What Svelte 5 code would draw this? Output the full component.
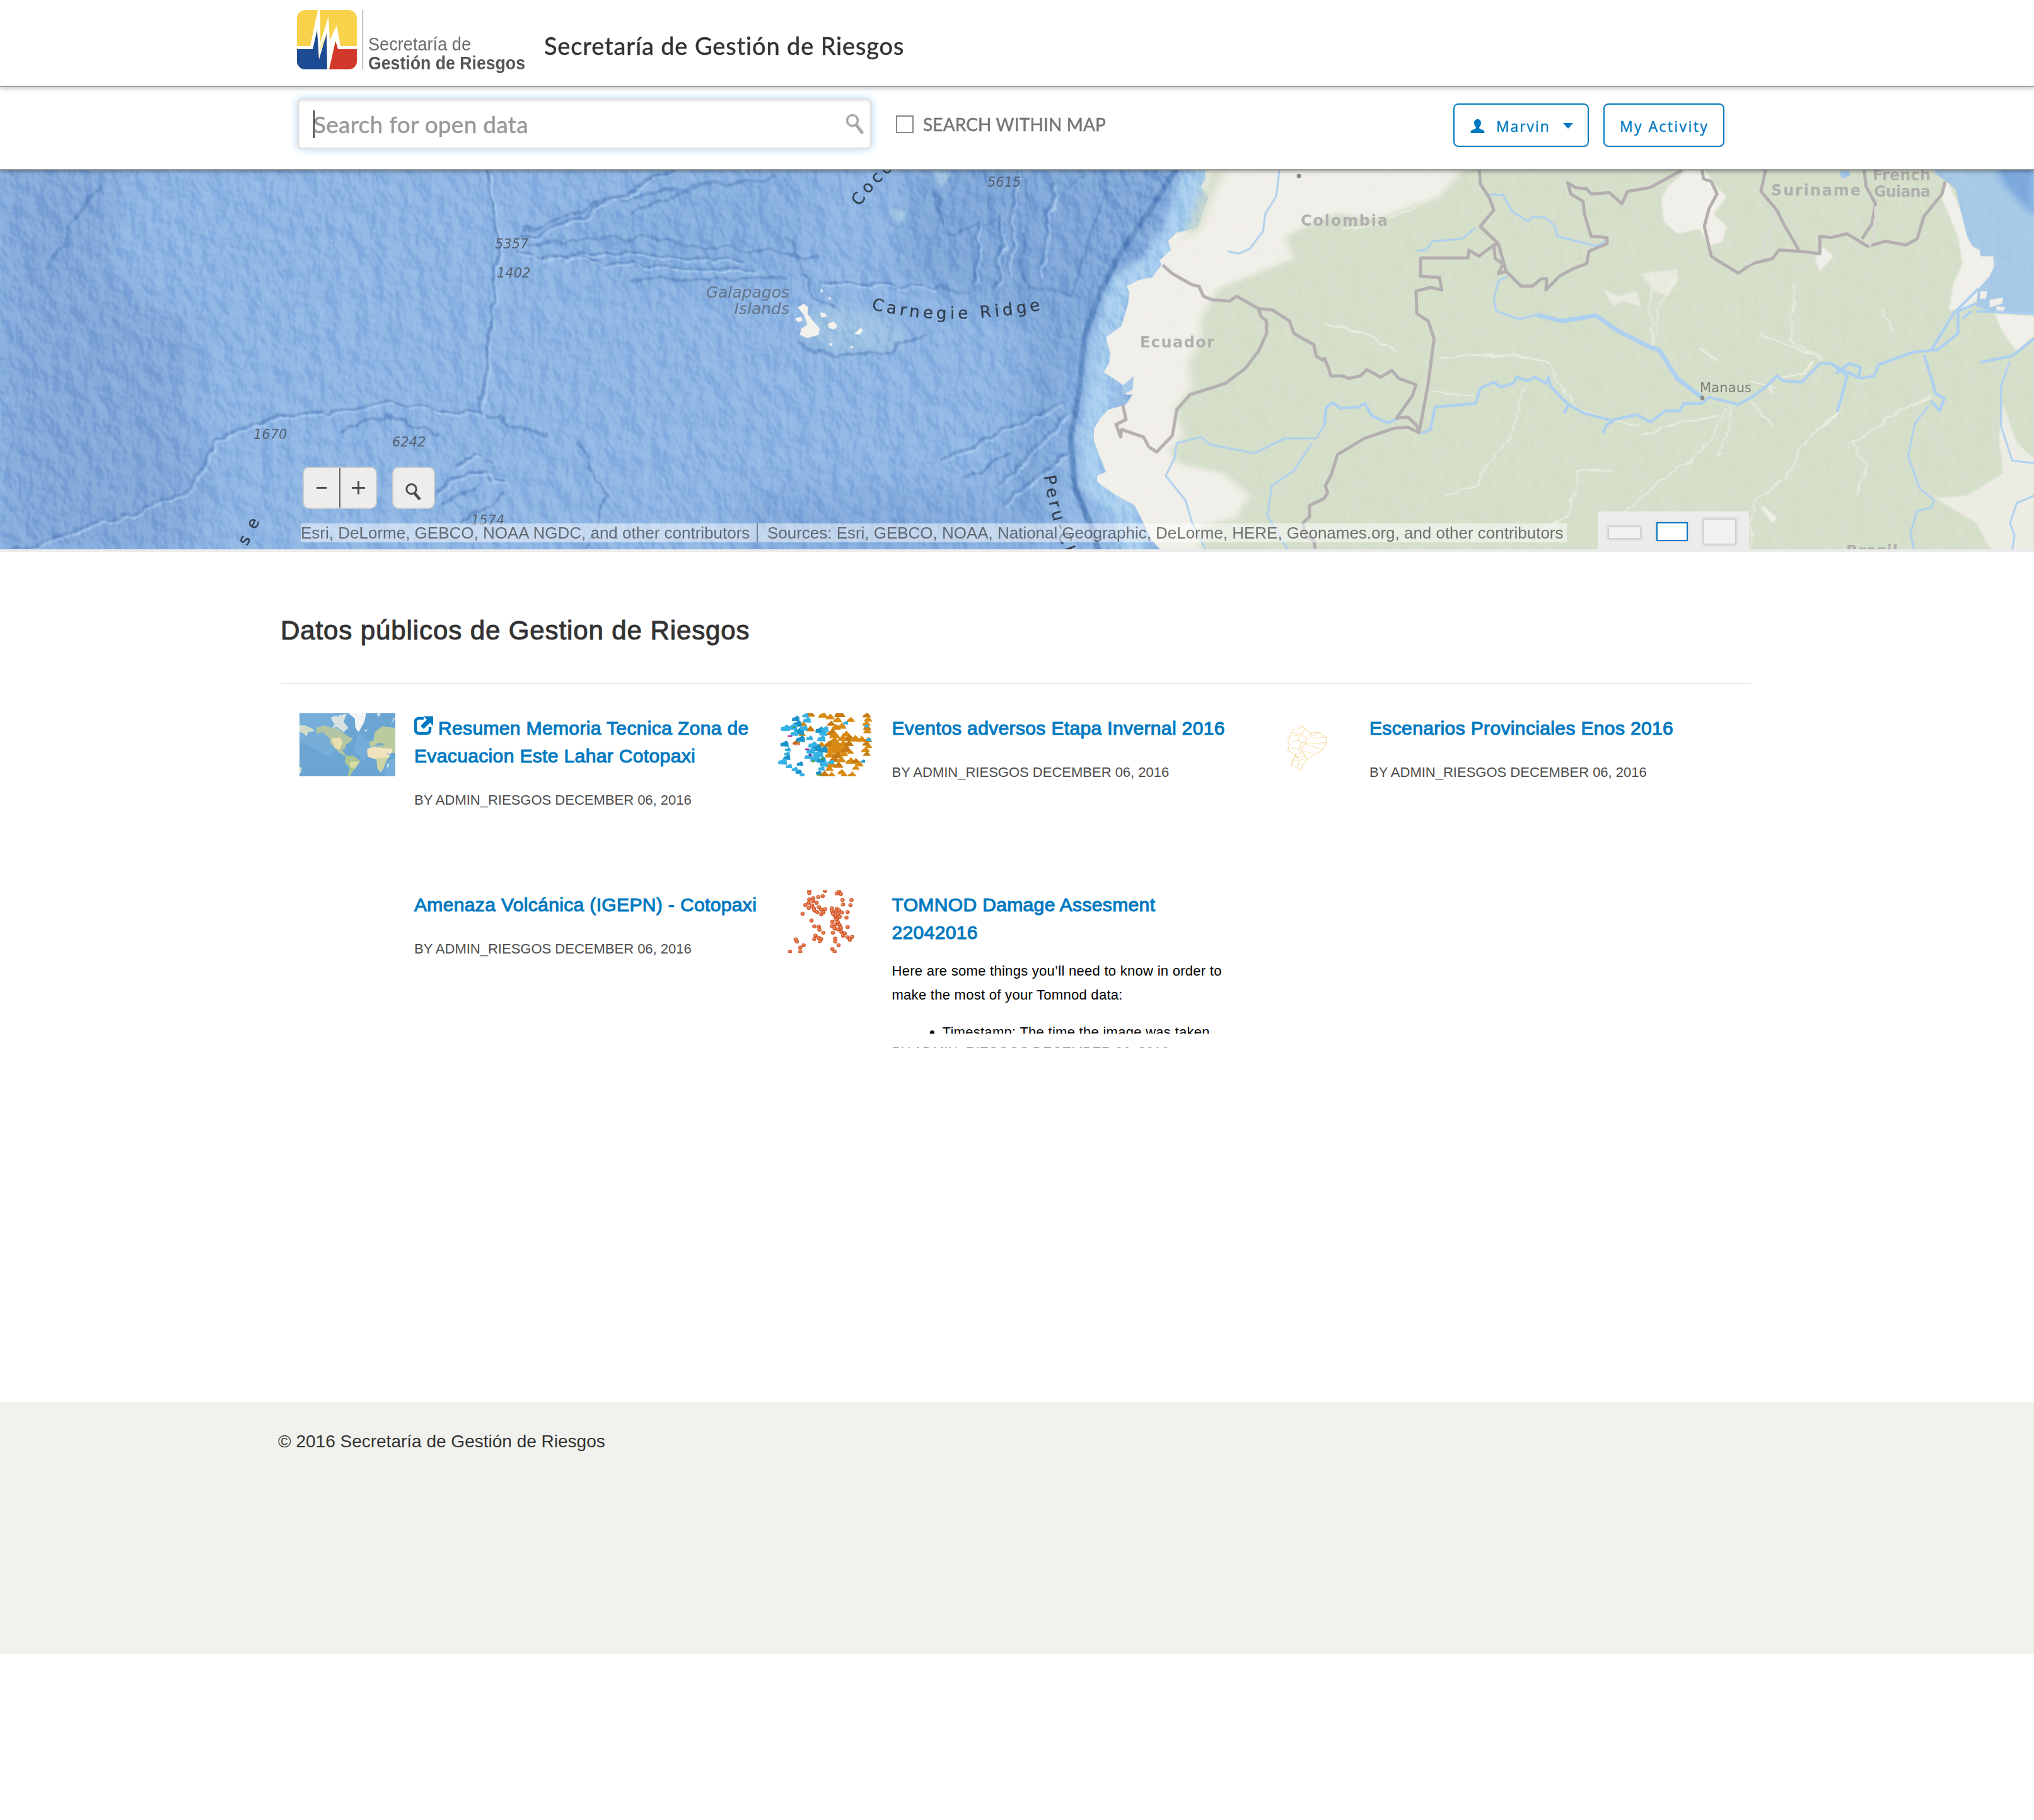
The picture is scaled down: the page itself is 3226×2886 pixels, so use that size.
<script>
  const byline = 'BY ADMIN_RIESGOS DECEMBER 06, 2016';
  const items = [
    { title: 'Resumen Memoria Tecnica Zona de Evacuacion Este Lahar Cotopaxi', thumb: 'world', external: true },
    { title: 'Eventos adversos Etapa Invernal 2016', thumb: 'events' },
    { title: 'Escenarios Provinciales Enos 2016', thumb: 'provinces' },
    { title: 'Amenaza Volcánica (IGEPN) - Cotopaxi', thumb: 'none' },
    { title: 'TOMNOD Damage Assesment 22042016', thumb: 'damage', description: true }
  ];

  // Marker symbols of the winter-season events thumbnail: [x, y, size]
  const blue = [[125,115,12],[155,100,10],[160,122,12],[130,140,14],[115,155,15],[92,160,14],[135,175,16],[120,185,12],[150,160,12],[200,170,14],[215,165,12],[210,185,12],[140,212,14],[168,208,10],[205,210,13],[90,235,13],[100,262,9],[98,282,9],[97,300,11],[84,320,14],[178,240,14],[190,255,16],[172,268,14],[195,282,16],[210,262,14],[165,295,13],[185,305,15],[205,312,14],[212,330,13],[235,322,10],[138,330,10],[104,341,10],[122,356,10],[134,368,10],[145,383,8],[205,352,10],[196,372,9],[280,135,8],[352,215,8],[334,318,7],[345,150,7]];
  const orange = [[170,95,14],[210,100,14],[232,108,13],[262,95,16],[255,122,13],[296,122,12],[346,100,12],[350,120,12],[345,140,12],[347,160,12],[348,176,12],[148,142,11],[170,165,13],[95,165,10],[145,190,10],[235,140,12],[250,158,14],[268,152,14],[238,182,16],[246,196,16],[282,190,14],[292,210,16],[310,212,15],[330,215,14],[350,218,12],[270,210,14],[245,222,16],[228,240,16],[250,242,18],[272,240,18],[290,235,14],[238,262,20],[262,265,20],[282,262,16],[205,240,12],[232,288,16],[255,290,16],[275,285,12],[295,275,10],[245,310,15],[266,312,14],[235,335,16],[258,338,14],[230,355,12],[296,318,15],[312,318,12],[322,332,13],[312,350,11],[345,235,12],[352,248,10],[342,265,13],[346,284,11],[268,370,12],[276,384,11],[214,380,14],[236,386,14],[300,384,14],[125,230,10],[185,300,9]];
  // Reported damage points
  const dots = [[743,95],[743,106],[771,95],[796,98],[792,107],[799,110],[767,120],[759,124],[750,130],[743,136],[750,144],[756,152],[742,152],[736,162],[748,164],[742,176],[751,178],[760,172],[752,188],[764,184],[771,182],[757,196],[768,198],[764,206],[818,138],[802,138],[816,163],[803,160],[783,178],[792,180],[783,190],[790,192],[796,188],[785,204],[794,206],[801,198],[789,218],[797,218],[790,212],[793,226],[811,196],[809,222],[731,204],[747,236],[791,232],[784,242],[794,244],[783,262],[790,256],[797,258],[788,274],[794,278],[799,272],[811,267],[752,264],[760,266],[761,280],[768,294],[785,294],[800,290],[806,298],[754,308],[760,318],[752,324],[764,324],[762,334],[789,322],[803,308],[811,316],[819,314],[815,328],[789,336],[719,326],[721,336],[795,354],[733,354],[727,365],[709,384],[727,385],[784,372],[788,384]];
  const depths = [['5357',785,394],['1402',788,440],['1670',402,696],['6242',622,708],['1574',747,832],['5615',1566,296]];
  const countries = [['Colombia',2063,358,138],['Ecuador',1808,551,118],['Suriname',2809,310,142],['French',2970,286,92],['Guiana',2972,312,90],['Brazil',2928,882,82]];
</script>

<div class="page">
  <header class="brand">
    <svg class="logo" viewBox="0 0 370 110" aria-label="Secretaría de Gestión de Riesgos">
      <clipPath id="badge"><rect x="0" y="0" width="95" height="94" rx="13" /></clipPath>
      <g clip-path="url(#badge)">
        <rect width="95" height="94" fill="#f8d24a" />
        <path d="M0 61H24L32 30L35 78L47 36L49 94H0Z" fill="#1c4a93" />
        <path d="M51 94L61 50L67 61H95V94Z" fill="#d2372b" />
        <path d="M0 57H21L33 0H37V52L50 10L52 48L63 24L69 57H95V62H65L61 48L51 94H48L47 36L35 78L32 31L25 62H0Z" fill="#fff" />
        <path d="M37 56L47 38L46 44L37 64Z" fill="#f8d24a" opacity=".5" />
      </g>
      <path d="M104.500 0V94" stroke="#8a8a8a" stroke-width="1.200" />
      <text class="logo-light" x="113" y="64" textLength="163" lengthAdjust="spacingAndGlyphs">Secretaría de</text>
      <text class="logo-bold" x="113" y="94" textLength="249" lengthAdjust="spacingAndGlyphs">Gestión de Riesgos</text>
    </svg>
    <h1>Secretaría de Gestión de Riesgos</h1>
  </header>

  <nav class="toolbar">
    <div class="search">
      <span class="caret"></span>
      <span class="placeholder">Search for open data</span>
      <svg width="30" height="34" viewBox="0 0 30 34" fill="none" stroke="#aaa"><circle cx="11" cy="11" r="8.500" stroke-width="3.600" /><path d="M17 18L26 30" stroke-width="5" stroke-linecap="round" /></svg>
    </div>
    <label class="within"><span class="box"></span><span class="within-text">SEARCH WITHIN MAP</span></label>
    <div class="actions">
      <button class="user">
        <svg width="23" height="22" viewBox="0 0 23 22" fill="#0079c1"><path d="M11.500 0C15 0 17 2.500 17 6C17 9 15.500 11 14 13C14 15 15 15.500 19 16.800C22 17.800 22.500 19 22.500 22H.5C.5 19 1 17.800 4 16.800C8 15.500 9 15 9 13C7.500 11 6 9 6 6C6 2.500 8 0 11.500 0Z" /></svg>
        <span>Marvin</span>
        <svg class="down" width="16" height="9" viewBox="0 0 16 9" fill="#0079c1"><path d="M0 0H16L8 9Z" /></svg>
      </button>
      <button class="activity">My Activity</button>
    </div>
  </nav>

  <section class="map">
    <svg class="basemap" viewBox="0 270 3226 601">
      <defs>
        <filter id="relief" x="0" y="0" width="100%" height="100%" color-interpolation-filters="sRGB">
          <feTurbulence type="fractalNoise" baseFrequency=".04 .03" numOctaves="3" seed="11" />
          <feColorMatrix values="0 0 0 0 0  0 0 0 0 0  0 0 0 0 0  1 0 0 0 0" />
          <feDiffuseLighting surfaceScale="9" diffuseConstant="1" lighting-color="#fff"><feDistantLight azimuth="325" elevation="30" /></feDiffuseLighting>
        </filter>
        <filter id="soft" x="-20%" y="-20%" width="140%" height="140%"><feGaussianBlur stdDeviation="9" /></filter>
        <filter id="softer" x="-20%" y="-20%" width="140%" height="140%"><feGaussianBlur stdDeviation="22" /></filter>
        <filter id="slight" x="-20%" y="-20%" width="140%" height="140%"><feGaussianBlur stdDeviation="2.500" /></filter>
        <filter id="rough" x="-5%" y="-5%" width="110%" height="110%">
          <feTurbulence type="fractalNoise" baseFrequency=".03" numOctaves="3" seed="4" />
          <feDisplacementMap in="SourceGraphic" scale="22" xChannelSelector="R" yChannelSelector="G" />
          <feGaussianBlur stdDeviation="1.300" />
        </filter>
        <path id="carnegie" d="M1382 490Q1500 522 1670 488" />
        <path id="cocos" d="M1364 328Q1385 290 1470 222" />
        <path id="peru" d="M1656 755Q1664 820 1705 920" />
        <path id="rise" d="M382 886L436 780" />
      </defs>
      <rect y="268" width="3226" height="604" fill="#8fb6e4" />

      <!-- sea floor shading -->
      <g filter="url(#softer)">
        <path d="M0 260H190L165 420L240 480L320 540L290 620L330 760L300 880H0Z" fill="#7fa6d7" opacity=".8" />
        <path d="M1450 250H1900L1810 430L1700 560L1640 880H1580L1640 520L1420 430Z" fill="#779fd3" opacity=".65" />
        <path d="M1180 780H1560V880H1180Z" fill="#7ca4d7" opacity=".6" />
        <path d="M850 350L1300 260L1250 440L1000 450Z" fill="#80a9da" opacity=".55" />
      </g>
      <path d="M1270 500L1330 480L1400 500L1440 540L1420 555L1330 562L1275 530Z" fill="#a8cbe4" opacity=".6" filter="url(#soft)" />
      <path d="M1410 330L1440 335L1425 360ZM1480 270L1510 275L1490 300Z" fill="#a8cbe4" opacity=".8" filter="url(#slight)" />
      <g fill="none" stroke="#6590c6" stroke-width="4.500" filter="url(#rough)" opacity=".75">
        <path d="M773 268L790 390L780 500L762 660M0 880L300 780L340 700L440 660L610 640L760 655L870 690M1000 340L1090 300L1230 280M820 380L930 340L1080 260M820 400L1000 420L1200 430" />
        <path d="M1262 545L1325 564L1400 558L1470 530M1490 730L1680 640M1580 770L1690 660M1590 800L1690 720M1550 350L1545 450M1590 340L1580 460M1670 290L1650 440M1760 268L1720 400L1700 470L1630 450M1300 450L1480 455L1540 465M1250 370L1290 470L1320 490" />
        <path d="M75 430L120 350L160 290M920 700L960 790L930 870M830 365L960 320L1060 300L1180 290M840 385L980 375L1100 390L1230 400L1300 410M850 410L1000 400L1180 415M1000 440L1100 445L1250 440M1010 300L1090 262M1480 300L1500 370L1580 350M1610 270L1600 440M1630 280L1622 450M1560 270L1570 330M1690 300L1720 280M1530 760L1600 720M540 680L620 660L700 690M720 740L760 720L790 745M690 780L740 750L800 760M700 800L760 770M730 830L800 780" />
      </g>
      <g fill="none" stroke="#b2d2f4" stroke-width="3" filter="url(#rough)" opacity=".7" transform="translate(5 4)">
        <path d="M773 268L790 390L780 500L762 660M0 880L300 780L340 700L440 660L610 640L760 655M820 380L930 340L1080 260M820 400L1000 420L1200 430M1490 730L1680 640M1580 770L1690 660M1590 800L1690 720M1550 350L1545 450M1590 340L1580 460M1670 290L1650 440M1610 270L1600 440M1300 450L1480 455M850 410L1000 400L1180 415M720 740L760 720L790 745M690 780L740 750L800 760" />
      </g>
      <g transform="translate(1000 260) scale(.7015 .3954)" fill="none" class="fixed">
        <path d="M1285 0L1240 250L1190 400L1110 500L1075 720L1065 900L1045 1080L1050 1270L1110 1400L1150 1568" stroke="#a8ceee" stroke-width="44" filter="url(#soft)" />
        <path d="M1240 0L1180 170L1110 350L1065 500L1025 700L1015 900L995 1100L1005 1300L1040 1450L1060 1568" stroke="#5f8cc4" stroke-width="9" filter="url(#slight)" />
      </g>
      <rect class="sea-relief" y="268" width="3226" height="604" filter="url(#relief)" />

      <!-- Galapagos -->
      <g transform="translate(1000 260) scale(.7015 .3954)" fill="#f4f2ec">
        <path d="M378 575L392 560L402 575L400 600L415 635L428 660L425 685L400 698L383 685L386 660L400 645L392 605ZM372 620L385 612L390 628L378 634ZM428 595L440 598L444 612L432 616ZM446 640L460 632L468 650L460 664L448 658ZM506 680L520 658L526 665L518 685ZM446 720L455 718L456 732ZM430 500L436 510L430 515ZM446 532L454 538L450 546ZM496 730L506 732L500 740Z" />
      </g>

      <!-- land -->
      <g transform="translate(1000 260) scale(.7015 .3954)">
        <path d="M1300 0L1300 60L1290 90L1308 130L1292 200L1283 255L1255 268L1235 275L1215 310L1222 345L1197 385L1200 405L1180 455L1150 465L1122 490L1128 515L1125 560L1110 650L1075 695L1085 760L1082 800L1070 835L1100 870L1115 890L1120 925L1135 925L1120 965L1080 985L1062 1020L1048 1060L1048 1110L1058 1160L1075 1235L1055 1250L1055 1275L1095 1325L1140 1370L1160 1440L1175 1500L1197 1545L1200 1600H3200V0Z" fill="#f1efe9" />
        <path d="M1112 925L1112 890L1138 850L1143 800L1138 850L1135 905Z" fill="#a9cbea" />
        <g filter="url(#soft)">
          <path d="M1590 200L1480 290L1500 380L1330 500L1290 620L1290 720L1260 800L1270 900L1230 980L1250 1090L1220 1150L1240 1200L1340 1240L1400 1330L1370 1420L1290 1450L1290 1600H3220V-20H1900L1830 130L1690 220Z" fill="#d5dfca" />
          <path d="M1310 20L1345 40L1315 130L1290 260L1250 310Z" fill="#d5dfca" opacity=".8" />
        </g>
      </g>
      <g transform="translate(2100 260) scale(.7181 .3954)">
        <g fill="#f1efe9" filter="url(#slight)">
          <path d="M760 90L800 25H840L870 100L890 130L860 200L890 250L880 310L850 330L830 260L780 280L750 230L745 140Z" />
          <path d="M615 500L650 530L690 510L700 570L660 550L640 570ZM700 440L780 420L780 470L760 530L730 510Z" opacity=".7" />
          <path d="M1100 330L1125 370L1095 430L1085 380Z" />
          <path d="M1375 60L1405 180L1480 370L1480 480L1420 580L1380 590L1390 480L1410 400L1400 290L1365 140ZM1480 600L1568 610V690L1530 750L1500 680Z" />
          <path d="M1500 960L1530 1120L1568 1180V1568H1480L1440 1440L1350 1340L1420 1330L1500 1240L1490 1100Z" opacity=".85" />
          <path d="M970 1370L1000 1420L990 1440L965 1380Z" />
        </g>
        <path d="M1345 0L1350 40L1375 70L1395 100L1405 180L1420 290L1432 330L1448 345L1450 370L1478 370L1480 410L1470 450L1445 500L1440 570L1470 590L1568 605V0Z" fill="#a8cae7" />
        <path d="M1450 510L1465 510L1462 540L1448 540ZM1470 545L1500 535L1498 560L1470 575ZM1485 570L1505 575L1500 590L1485 588Z" fill="#f1efe9" />
        <path d="M1480 0L1500 80L1568 210V0Z" fill="#7eaade" filter="url(#soft)" />
        <path d="M1138 30L1160 26L1162 45L1145 60Z" fill="#a6c9ec" />
        <g fill="none" class="fixed" stroke="#eff1e4" stroke-width="3" opacity=".7" filter="url(#rough)">
          <path d="M250 780L330 765L440 770L500 800L520 880L560 980L640 1030L700 1050M440 900L410 1100L370 1180L340 1290L270 1330M700 1090L800 1030L870 1010M890 980L850 1110L810 1190L740 1270L700 1340L660 1400M900 970L890 1100L870 1170M940 950L990 1050M1130 1000L1060 1120L1030 1230L990 1300L950 1350L940 1460L950 1568M780 450L740 560L730 730M720 430L725 730M1040 480L1030 700L1100 790M1230 580L1260 670M960 680L1100 780M1340 930L1270 990L1170 1120L1200 1220L1170 1330M640 1230L560 1230L550 1330L540 1410L470 1480M0 640L90 680L160 750M240 910L330 930M40 260L120 240L230 150" />
        </g>
        <path d="M1340 940L1300 970M940 870L1000 900M1000 860L1060 840L1080 790M830 740L870 790M980 880L990 920M1100 1060L1140 990" fill="none" stroke="#f1efe6" stroke-width="7" opacity=".7" />
      </g>
      <rect class="land-relief" x="1740" y="268" width="1486" height="604" filter="url(#relief)" />

      <!-- rivers -->
      <g fill="none" stroke="#aed0f0" stroke-width="3" stroke-linejoin="round">
        <g class="fixed" transform="translate(1000 260) scale(.7015 .3954)">
          <path d="M1467 25L1460 130L1435 200L1430 270L1400 340L1375 360L1350 350M1300 1545L1270 1440L1255 1350L1210 1250L1230 1180L1235 1120L1290 1095L1310 1125L1410 1160L1480 1100L1550 1100L1568 1050M1540 1120L1500 1230L1450 1290L1440 1410L1485 1545" />
        </g>
        <g class="fixed" transform="translate(2100 260) scale(.7181 .3954)">
          <path d="M355 110L360 122L395 125L415 190L450 230L460 213L490 215L510 250L515 290L600 330L625 305M205 348L225 345L240 310L305 300L335 255M405 450L385 470L375 540L380 590L430 622L470 605" />
          <path d="M0 1050L5 975L20 958L35 980L75 975L90 960L105 1010L140 1038L165 1020M215 1080L235 1065L245 975L335 960L345 900L375 875L390 895L418 880L425 855L450 870L465 855L490 880L495 855L500 890L520 930L540 965L575 1000L635 1028L690 1005L720 1035L755 990L785 990L795 960L835 960L850 935L915 965L945 935L975 895L1000 850L1015 870L1055 875L1095 800L1120 800L1150 830L1185 860L1215 850L1225 805L1300 755L1355 745L1400 680L1400 590L1440 560" stroke-width="4.500" />
          <path d="M470 605L525 630L600 608L650 670L720 735L740 745L780 860L835 937" stroke-width="7" />
          <path d="M1120 800L1155 850L1145 920L1133 995M1325 765L1345 880L1350 920L1370 940L1360 990L1340 950M1130 840L1160 800L1185 815L1180 860M1340 750L1370 660L1390 600L1445 500M1410 620L1430 590M530 1000L540 965M615 1080L625 1045L640 1030M1568 700L1520 770L1450 795M1440 590L1568 600" stroke-width="4.500" />
          <path d="M1335 970L1305 1040L1290 1170L1315 1300L1348 1350L1340 1380L1310 1390L1295 1480L1303 1545M1515 790L1495 890L1495 1050L1520 1190L1568 1200M1568 1330L1530 1360L1515 1440L1525 1490L1520 1545" />
        </g>
      </g>

      <!-- borders -->
      <g fill="none" stroke="#b3afb0" stroke-width="5" stroke-linejoin="round">
        <g class="fixed" transform="translate(1000 260) scale(.7015 .3954)">
          <path d="M1203 405L1225 440L1250 465L1270 485L1285 490L1295 530L1315 545L1355 550L1370 530L1400 560L1420 580L1450 585L1490 630L1500 680L1545 725L1550 770L1568 790M1420 580L1425 610L1438 630L1438 680L1420 750L1390 820L1345 880L1265 925L1235 985L1225 1090L1200 1135L1190 1155L1172 1135L1160 1095L1110 1065L1108 1095L1098 1045L1120 1025L1113 965M1570 1340L1535 1370L1535 1415L1520 1440L1525 1490L1545 1510L1550 1568" />
        </g>
        <g class="fixed" transform="translate(2100 260) scale(.7181 .3954)">
          <path d="M0 775L10 820L15 850L40 850L55 860L80 850L95 825L125 855L150 828L165 860L203 885L195 930L160 1020L185 1015L205 1050L210 1078L230 880L243 700L230 630L205 600L203 510L235 495L260 505L255 455L213 450L213 377L318 377L320 345L342 370L375 325L385 320L345 250L375 185L365 135L345 80L343 25M385 320L402 430L435 490L460 490L480 460L492 460L490 505L520 450L550 420L580 400L585 350L625 320L625 295L590 290L575 200L572 150L545 120L538 75L555 95L580 100L590 120L630 115L658 160L670 110L720 95L755 60L790 25M375 325L378 380L395 400L385 440L402 430M210 1078L185 1055L155 1060L90 1100L30 1165L15 1250L3 1290L8 1320L0 1340" />
          <path d="M835 25L838 60L855 70L868 120L850 180L840 250L855 370L885 405L915 438L945 400L990 380L1005 345L1050 350L1095 360L1095 290L1120 295L1155 280L1200 330L1240 310L1285 325L1310 300L1325 210L1365 120L1372 70M975 25L965 110L1000 185L1015 240L1050 350M1193 25L1197 90L1218 160L1210 240L1188 300" />
          <path d="M990 180L1000 230L975 310L970 360L930 410M1218 170L1215 270L1205 330" stroke="#ddd9d8" stroke-width="4" stroke-dasharray="14 5" />
        </g>
      </g>

      <g class="depth">{#each depths as [t, x, y]}<text {x} {y}>{t}</text>{/each}</g>
      <g class="islands" text-anchor="end"><text x="1252" y="472">Galapagos</text><text x="1252" y="498">Islands</text></g>
      <g class="country">{#each countries as [t, x, y, w]}<text {x} {y} textLength={w}>{t}</text>{/each}</g>
      <text class="city" x="2696" y="622" textLength="82">Manaus</text>
      <circle cx="2700" cy="631" r="3.500" fill="#8b8b87" />
      <circle cx="2060" cy="279" r="3.500" fill="#8b8b87" />
      <g class="ridge">
        <text><textPath href="#carnegie">Carnegie Ridge</textPath></text>
        <text><textPath href="#cocos">Cocos Ridge</textPath></text>
        <text><textPath href="#peru">Peru-Chile</textPath></text>
        <text class="wide-spaced"><textPath href="#rise">ise</textPath></text>
      </g>
    </svg>

    <div class="overlay">
      <div class="controls">
        <div class="zoom"><span><i class="minus"></i></span><span><i class="minus wide"></i><i class="upright"></i></span></div>
        <div class="locate"><svg width="26" height="28" viewBox="0 0 26 28" fill="none" stroke="#4c4c4c"><circle cx="9.500" cy="9.500" r="7.700" stroke-width="3" /><path d="M14.500 16L23 26" stroke-width="4.500" /></svg></div>
      </div>
      <div class="attribution"><span class="first">Esri, DeLorme, GEBCO, NOAA NGDC, and other contributors</span><span class="second">Sources: Esri, GEBCO, NOAA, National Geographic, DeLorme, HERE, Geonames.org, and other contributors</span></div>
      <div class="sizes"><span class="small"></span><span class="medium"></span><span class="large"></span></div>
    </div>
  </section>

  <main>
    <h2><span>Datos públicos de Gestion de Riesgos</span></h2>
    <div class="grid">
      {#each items as item}
        <article>
          <div class="thumb">
            {#if item.thumb === 'world'}
              <svg viewBox="88 570 298 300" preserveAspectRatio="none">
                <rect x="88" y="570" width="298" height="300" fill="#6ba5d3" />
                <path d="M88 570H200L240 690L180 780L88 700ZM270 660L310 720L290 800L260 750ZM360 800L386 780V870H350Z" fill="#7ab1dc" opacity=".7" />
                <path d="M140 640L165 628L190 640L210 645L225 665L240 680L255 690L243 710L232 720L230 740L220 745L230 765L240 775L225 770L210 755L198 735L184 715L182 690L160 660L142 668Z" fill="#b3c5a3" />
                <path d="M186 690L215 685L222 710L212 745L198 735Z" fill="#eadfae" />
                <path d="M185 590L205 580L210 610L195 620ZM210 580L235 572L225 610L240 640L225 660L205 635L190 640L198 620Z" fill="#d7e1df" />
                <path d="M240 570H295L290 610L272 660L262 640L260 595Z" fill="#f4f6f6" />
                <path d="M230 775L255 772L277 797L265 825L252 850L245 870H238L244 830L229 805Z" fill="#aec792" />
                <path d="M245 800L275 800L260 835L246 825Z" fill="#d9dda2" />
                <path d="M88 628L105 628L130 645L135 655L115 660L110 680L100 665L88 658ZM88 825L96 830L92 855H88Z" fill="#d3dcc8" />
                <path d="M320 680L322 660L345 632L386 640V760L365 755L350 735L325 722L308 730L305 705L318 700Z" fill="#bccb9d" />
                <path d="M298 740L320 727L350 735L362 765L370 770L355 800L350 830L340 852L330 830L328 790L300 778Z" fill="#efe3be" />
                <path d="M328 785L362 780L350 830L340 850L330 830Z" fill="#cdd5a0" />
                <path d="M350 735L378 740L372 765L360 760Z" fill="#f4e4c5" />
                <path d="M325 715L345 712L352 724L330 722Z" fill="#6ba5d3" />
                <path d="M360 810L367 815L362 832ZM290 648L300 650L293 658ZM328 572L340 570L335 588ZM372 625L380 595L386 590" fill="#e4ecec" />
              </svg>
            {:else if item.thumb === 'events'}
              <svg viewBox="68 90 298 300" preserveAspectRatio="none">
                {#each orange as [x, y, s], i}<path d="M{x - s * 1.1} {y + s * .8}L{x - s * .8} {y - s * .2}L{x - s * .3} {y - s * .6}L{x} {y - s * 1.3}L{x + s * .7} {y - s * .2}L{x + s * 1.1} {y + s * .8}Z" fill={i % 3 ? '#d98a12' : '#c77b12'} />{/each}
                {#each blue as [x, y, s], i}<path d="M{x - s} {y + s * .9}L{x - s * .9} {y - s * .3}L{x - s * .2} {y - s * .5}L{x + s * .3} {y - s * 1.2}L{x + s * .9} {y - s * .6}L{x + s} {y + s * 1.1}Z" fill={i % 3 ? '#35b1e4' : '#1a94cb'} />{/each}
                <path d="M100 196H114V202H100ZM154 258H166V264H154ZM168 280L176 292L166 294Z" fill="#a31a96" />
                <path d="M120 228H136V240H120Z" fill="none" stroke="#c44d1c" stroke-width="3" />
                <path d="M118 150L125 158L116 160ZM172 318L184 312L180 326ZM194 374L204 386H190ZM208 300L214 312H204Z" fill="#4f9b2f" />
              </svg>
            {:else if item.thumb === 'provinces'}
              <svg viewBox="54.700 210 277 300" preserveAspectRatio="none" fill="none" stroke="#f7d590" stroke-width="2">
                <path d="M190 268L200 285L215 300L240 302L262 325L262 350L250 385L220 415L205 430L195 455L185 482L178 468L160 460L165 440L172 405L160 395L150 388L155 360L150 345L160 310L165 290L185 282Z" />
                <path d="M165 305L190 310L200 285M190 310L205 330L262 325M205 330L200 355L262 350M200 355L250 385M200 355L190 380L205 430M160 345L180 340L190 350L182 380L190 400L172 405M180 340L185 318L165 315M190 350L205 345M182 380L165 375L155 388M170 405L180 425L192 412L205 420M160 440L195 430M178 468L184 440M215 300L218 320L240 302M165 420L178 410M200 390L225 405" />
              </svg>
            {:else if item.thumb === 'damage'}
              <svg viewBox="686.500 90 170 300" preserveAspectRatio="none">
                {#each dots as [x, y]}<ellipse cx={x} cy={y} rx="3.400" ry="8.500" fill="#e2693a" stroke="#b9441c" stroke-width="1" /><ellipse cx={x - .6} cy={y - 2} rx="1.300" ry="3" fill="#f6a57c" />{/each}
              </svg>
            {/if}
          </div>
          <div class="body">
            <h3>{#if item.external}<svg class="ext" width="30" height="30" viewBox="0 0 30 30"><path d="M15 3H8Q2 3 2 9V21Q2 27 8 27H19Q25 27 25 21V17" fill="none" stroke="#0079c1" stroke-width="4.500" /><path d="M15 0H30V15L25 10L15 20L10 15L20 5Z" fill="#0079c1" /></svg>{/if}{item.title}</h3>
            {#if item.description}
              <div class="description">
                <p>Here are some things you’ll need to know in order to make the most of your Tomnod data:</p>
                <ul><li>Timestamp: The time the image was taken</li></ul>
              </div>
            {/if}
            <p class="byline">{byline}</p>
          </div>
        </article>
      {/each}
    </div>
  </main>

  <footer>© 2016 Secretaría de Gestión de Riesgos</footer>
</div>

<style>
  :global(body) { background: #fff; }
  .page { width: 3226px; height: 2886px; overflow: hidden; background: #fff; font-family: "Liberation Sans", Arial, sans-serif; color: #333; display: flex; flex-direction: column; }
  h1, h2, h3, p, ul { margin: 0; padding: 0; font-weight: 400; }
  .brand { height: 136px; flex: none; padding-left: 471px; display: flex; border-bottom: 2px solid #a4a4a4; box-shadow: 0 2px 7px rgba(0, 0, 0, .25); position: relative; z-index: 2; box-sizing: content-box; }
  .logo { width: 370px; height: 110px; margin-top: 16px; flex: none; }
  .logo-light { font: 29px "Liberation Sans", sans-serif; fill: #6c6c6c; }
  .logo-bold { font: bold 30px "Liberation Sans", sans-serif; fill: #555; }
  h1 { margin: 47px 0 0 22px; font: 38px/50px Lato, sans-serif; letter-spacing: .86px; white-space: nowrap; -webkit-text-stroke: .5px #333; }
  .toolbar { height: 132px; flex: none; box-sizing: border-box; border-bottom: 2px solid #999c98; box-shadow: 0 2px 6px rgba(0, 0, 0, .35); position: relative; z-index: 1; padding-left: 471px; display: flex; align-items: flex-start; background: #fff; }
  .search { width: 912px; height: 81px; box-sizing: border-box; margin-top: 18px; border: 3px solid #e3e1e1; border-radius: 8px; box-shadow: 0 0 14px #b4dcf8, inset 0 2px 4px rgba(0, 0, 0, .08); display: flex; align-items: center; padding: 0 9px 0 23px; }
  .caret { width: 2px; height: 44px; background: #333; }
  .placeholder { flex: 1; font: 37px/44px Lato, sans-serif; color: #999; margin-left: -2px; letter-spacing: .25px; -webkit-text-stroke: .5px #999; }
  .within { display: flex; margin: 39px 0 0 38px; align-items: center; height: 40px; gap: 15px; }
  .box { width: 28px; height: 28px; box-sizing: border-box; border: 2px solid #888; }
  .within-text { font: 28px/36px Lato, sans-serif; color: #757575; white-space: nowrap; letter-spacing: .15px; -webkit-text-stroke: .5px #757575; width: 300px; }
  .actions { display: flex; gap: 23px; margin: 26px 491px 0 auto; }
  button { height: 69px; box-sizing: border-box; border: 2px solid #0079c1; border-radius: 8px; background: #fff; color: #0079c1; font: 23px/30px "Open Sans", sans-serif; letter-spacing: 2.4px; padding: 2px 0 0 25px; display: flex; align-items: center; white-space: nowrap; text-align: left; -webkit-text-stroke: .4px #0079c1; }
  .user { width: 215px; letter-spacing: 1.9px; }
  .user span { margin-left: 18px; width: 106px; }
  .activity { width: 192px; padding-left: 24px; }
  .map { height: 601px; flex: none; border-bottom: 4px solid #ebebeb; display: grid; overflow: hidden; }
  .basemap, .overlay { grid-area: 1 / 1; }
  .basemap { width: 3226px; height: 601px; display: block; }
  .fixed path { vector-effect: non-scaling-stroke; }
  .sea-relief { mix-blend-mode: soft-light; opacity: .24; }
  .land-relief { mix-blend-mode: soft-light; opacity: .07; }
  .depth text { font: italic 21px "DejaVu Sans", sans-serif; fill: #566070; }
  .islands text { font: italic 25px "DejaVu Sans", sans-serif; fill: #647489; }
  .country text { font: bold 24px "DejaVu Sans", sans-serif; fill: #b1afae; }
  .city { font: 21px "DejaVu Sans", sans-serif; fill: #7c7d78; }
  .ridge text { font: 26px "DejaVu Sans", sans-serif; fill: #333f50; letter-spacing: 5.500px; stroke: #333f50; stroke-width: .4; }
  .ridge .wide-spaced { letter-spacing: 15px; }
  .overlay { position: relative; display: grid; grid-template-columns: 2057px 240px; padding-left: 477px; grid-template-rows: 541px 60px; }
  .controls { grid-column: 1; grid-row: 1; align-self: end; display: flex; gap: 24px; padding: 0 0 5px 3px; height: 66px; }
  .zoom, .locate { border: 2px solid #c9cbcd; border-radius: 10px; background: #ededed; box-sizing: border-box; height: 67px; display: flex; }
  .zoom { width: 118px; }
  .zoom span { flex: 1; display: grid; place-items: center; }
  .zoom span + span { border-left: 2px solid #666; }
  .zoom i { grid-area: 1 / 1; background: #4c4c4c; }
  .minus { width: 16px; height: 3px; }
  .minus.wide { width: 21px; height: 3px; }
  .upright { width: 3px; height: 21px; }
  .locate { width: 68px; align-items: center; justify-content: center; padding-top: 12px; }
  .attribution { grid-row: 2; grid-column: 1; width: 2008px; height: 30px; margin-top: 19px; background: rgba(255, 255, 255, .5); font-size: 26px; line-height: 30px; color: rgba(45, 45, 45, .66); display: flex; white-space: nowrap; }
  .first { width: 723px; border-right: 2px solid rgba(45, 45, 45, .5); box-sizing: content-box; }
  .second { margin-left: 15px; letter-spacing: -.02px; }
  .sizes { grid-row: 2; grid-column: 2; background: #ececec; display: flex; align-items: center; padding-left: 18px; }
  .sizes span { box-sizing: border-box; width: 49px; background: #f1f1f1; box-shadow: 0 0 4px 2px #c4c4c4; }
  .sizes .small { height: 17px; margin-top: 6px; }
  .sizes .medium { width: 50px; height: 30px; background: #fff; border: 2px solid #0079c1; margin: 4px 26px 0; box-shadow: 0 0 3px #bbb; }
  .sizes .large { height: 38px; margin-top: 4px; }
  main { padding-left: 445px; width: 2332px; height: 1348px; flex: none; }
  h2 { height: 208px; border-bottom: 2px solid #ededed; font-size: 42px; line-height: 48px; letter-spacing: .9px; -webkit-text-stroke: 1px #333; display: flex; }
  h2 span { margin-top: 101px; }
  .grid { display: grid; grid-template-columns: repeat(3, 757.5px); grid-auto-rows: 250px; row-gap: 30px; padding: 46px 0 0 30px; }
  article { display: flex; gap: 30px; overflow: hidden; }
  .thumb { width: 152px; height: 100px; flex: none; }
  .thumb svg { display: block; width: 152px; height: 100px; }
  .body { width: 545px; padding-top: 2px; }
  h3 { font-size: 30px; line-height: 44px; color: #0079c1; letter-spacing: .36px; -webkit-text-stroke: 1.1px #0079c1; }
  .ext { margin-right: 8px; vertical-align: -1px; }
  .byline { font-size: 22px; line-height: 36px; margin-top: 30px; color: #4c4c4c; letter-spacing: 0; white-space: nowrap; }
  .description { height: 118px; margin-top: 20px; overflow: hidden; font-size: 22px; line-height: 38px; color: #000; letter-spacing: .28px; }
  .description ul { margin-top: 21px; padding-left: 80px; }
  .description + .byline { margin-top: 11px; }
  footer { height: 400px; flex: none; background: #f1f2ed; padding: 45px 0 0 441px; font-size: 28px; line-height: 36px; box-sizing: border-box; }
</style>
